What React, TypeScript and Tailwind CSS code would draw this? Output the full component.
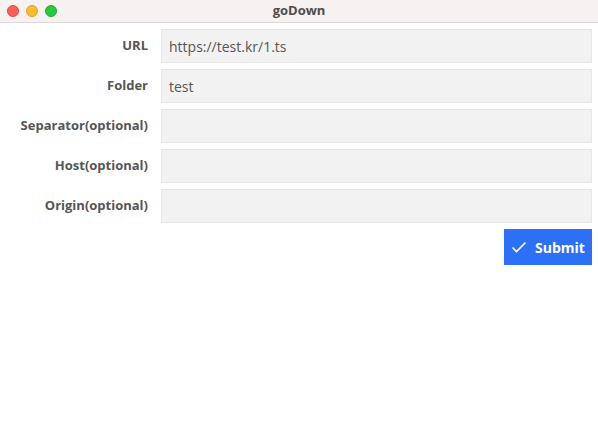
import React from "react";

const rows: { label: string; value: string }[] = [
  { label: "URL", value: "https://test.kr/1.ts" },
  { label: "Folder", value: "test" },
  { label: "Separator(optional)", value: "" },
  { label: "Host(optional)", value: "" },
  { label: "Origin(optional)", value: "" },
];

export default function App() {
  return (
    <div
      className="w-[598px] h-[423px] bg-white flex flex-col overflow-hidden"
      style={{ fontFamily: '"Open Sans", "Noto Sans", sans-serif' }}
    >
      <div className="h-[23px] shrink-0 bg-[#f7f1f1] border-b border-[#dcd8d8] flex items-center relative">
        <div className="flex gap-[7px] pl-[7px]">
          <span className="w-[12px] h-[12px] rounded-full bg-[#fe5f57] border border-[#e2463f]" />
          <span className="w-[12px] h-[12px] rounded-full bg-[#febc2e] border border-[#dea123]" />
          <span className="w-[12px] h-[12px] rounded-full bg-[#28c840] border border-[#1aab29]" />
        </div>
        <div className="absolute inset-0 flex items-center justify-center text-[13px] font-bold text-[#4d4d4d]">
          goDown
        </div>
      </div>
      <div className="flex flex-col gap-[6px] pt-[6px] pr-[6px]">
        {rows.map((r) => (
          <div key={r.label} className="flex items-center">
            <div className="w-[148px] pr-0 text-right text-[13px] font-bold text-[#555]">
              {r.label}
            </div>
            <div className="ml-[13px] flex-1 h-[34px] bg-[#f2f2f2] border border-[#e6e6e6] flex items-center px-[7px] text-[14px] text-[#555]">
              {r.value}
            </div>
          </div>
        ))}
        <div className="flex justify-end">
          <button className="w-[88px] h-[36px] bg-[#2b70f6] text-white text-[14px] font-bold flex items-center justify-center gap-[8px]">
            <svg width="16" height="12" viewBox="0 0 16 12" fill="none">
              <path d="M1.5 6.5 L5.5 10.5 L14.5 1.5" stroke="white" strokeWidth="1.6" />
            </svg>
            Submit
          </button>
        </div>
      </div>
    </div>
  );
}
